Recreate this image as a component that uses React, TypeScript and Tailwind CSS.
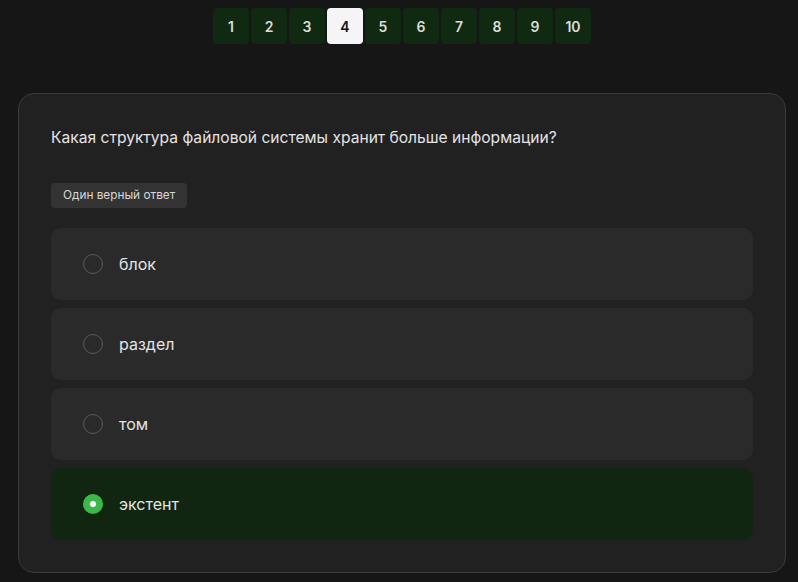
const pages = [1, 2, 3, 4, 5, 6, 7, 8, 9, 10];

const options = [
  { label: "блок", selected: false },
  { label: "раздел", selected: false },
  { label: "том", selected: false },
  { label: "экстент", selected: true },
];

function Radio({ checked }: { checked: boolean }) {
  if (checked) {
    return (
      <span className="flex h-5 w-5 items-center justify-center rounded-full bg-[#3cb84a]">
        <span className="h-1.5 w-1.5 rounded-full bg-white" />
      </span>
    );
  }
  return <span className="h-5 w-5 rounded-full border border-[#5a5a5a]" />;
}

export default function App() {
  return (
    <div
      className="min-h-[582px] w-full bg-[#161616] pt-2"
      style={{ fontFamily: "Inter, 'Noto Sans', sans-serif" }}
    >
      <div className="flex justify-center gap-[2px] pl-[6px]">
        {pages.map((p) => (
          <button
            key={p}
            className={
              p === 4
                ? "flex h-9 w-9 items-center justify-center rounded-[4px] bg-[#f5f5f7] text-[14px] font-semibold text-[#111]"
                : "flex h-9 w-9 items-center justify-center rounded-[4px] bg-[#0f2a10] text-[14px] font-semibold text-[#dcdcdc]"
            }
          >
            {p}
          </button>
        ))}
      </div>

      <div className="ml-[18px] mr-[12px] mt-[49px] rounded-[16px] border border-[#3a3a3a] bg-[#212121] px-8 pb-8 pt-8">
        <p className="text-[15.6px] leading-6 text-[#e4e4e4]">
          Какая структура файловой системы хранит больше информации?
        </p>
        <div className="mt-[33px] inline-flex h-[25px] items-center rounded-[4px] bg-[#333333] px-3 text-[11.8px] text-[#d8d8d8]">
          Один верный ответ
        </div>
        <div className="mt-5 flex flex-col gap-2">
          {options.map((o) => (
            <div
              key={o.label}
              className={
                o.selected
                  ? "flex h-[72px] items-center gap-4 rounded-[10px] bg-[#112611] pl-[32px]"
                  : "flex h-[72px] items-center gap-4 rounded-[10px] bg-[#2a2a2a] pl-[32px]"
              }
            >
              <Radio checked={o.selected} />
              <span className="text-[16px] text-[#e4e4e4]">{o.label}</span>
            </div>
          ))}
        </div>
      </div>
    </div>
  );
}
